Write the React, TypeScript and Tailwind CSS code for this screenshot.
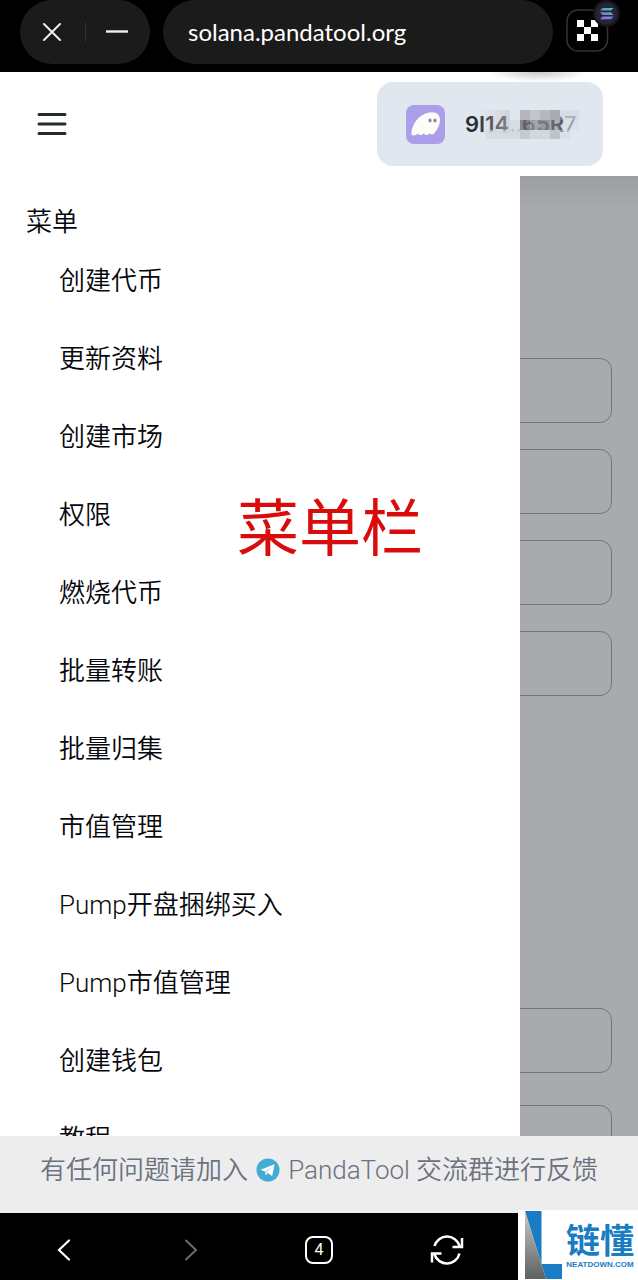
import React from 'react';

const menuItems = [
  '创建代币',
  '更新资料',
  '创建市场',
  '权限',
  '燃烧代币',
  '批量转账',
  '批量归集',
  '市值管理',
  'Pump开盘捆绑买入',
  'Pump市值管理',
  '创建钱包',
  '教程',
];

const inputClass =
  'block h-[65px] w-full shrink-0 rounded-xl border border-[#74757a] bg-transparent px-4 text-2xl outline-none';

function BrowserBar() {
  return (
    <div className="flex h-[72px] shrink-0 items-start bg-black pl-5 font-['Lato',sans-serif]">
      <div className="flex h-16 w-[130px] shrink-0 items-center justify-between rounded-full bg-[#1b1b1b] px-5">
        <button type="button" aria-label="关闭" className="flex size-6 items-center justify-center">
          <svg width="20" height="20" viewBox="0 0 20 20" fill="none" stroke="#efefef" strokeWidth="2" strokeLinecap="round">
            <path d="M2 2 18 18M18 2 2 18" />
          </svg>
        </button>
        <span className="h-5 w-px bg-[#303030]" />
        <button type="button" aria-label="最小化" className="flex size-6 items-center justify-center">
          <svg width="24" height="20" viewBox="0 0 24 20" fill="none" stroke="#efefef" strokeWidth="2.400">
            <path d="M0 9.500h22" />
          </svg>
        </button>
      </div>
      <div className="ml-[13px] flex h-16 min-w-0 flex-1 items-center rounded-full bg-[#1b1b1b] pl-[25px] text-2xl text-white">
        solana.pandatool.org
      </div>
      <button type="button" aria-label="钱包" className="relative mt-2 mr-7 ml-[13px] size-11 shrink-0">
        <svg width="44" height="44" viewBox="0 0 44 44">
          <rect x="1" y="2" width="40.500" height="41" rx="11" fill="#000" stroke="#333" strokeWidth="1.500" />
          <path fill="#fff" d="M11 12h7v7h-7zM18 19h7v7h-7zM25 12h7v7h-7zM11 26h7v7h-7zM25 26h7v7h-7z" />
        </svg>
        <svg className="absolute -top-2 left-[26px]" width="30" height="30" viewBox="0 0 30 30">
          <defs>
            <linearGradient id="sol" x1="0" y1="1" x2="1" y2="0">
              <stop offset="0" stopColor="#a65be0" />
              <stop offset="0.5" stopColor="#6c8ccc" />
              <stop offset="1" stopColor="#35d6b5" />
            </linearGradient>
          </defs>
          <circle cx="14.500" cy="13.500" r="13.500" fill="#16161a" />
          <circle cx="14.500" cy="13.500" r="11" fill="#252535" />
          <path fill="url(#sol)" d="M10.500 8h11l-2.500 2.600H8zM8 12.300h11l2.500 2.600h-11zM10.500 16.600h11L19 19.200H8z" />
        </svg>
      </button>
    </div>
  );
}

function GhostIcon() {
  return (
    <svg width="39" height="39" viewBox="0 0 39 39" className="shrink-0">
      <rect width="39" height="39" rx="8" fill="#ab9fec" />
      <path
        fill="#fffdf8"
        d="M5.500 27.500C6.500 17 15 7.500 26 7.200c5.500 0 8.300 3.500 8 8.300-.5 5.500-3 10-6 13-1.600 1.500-3.600 1.200-4.200-.5-1.500 2.300-4.800 3-5.900.2-1.500 2.300-4.800 2.500-5.800.3-1.600 1.500-4.600 2.500-6.100 1.600-.6-.4-.6-1.500-.5-2.600z"
      />
      <ellipse cx="24" cy="15.500" rx="1.600" ry="2.100" fill="#8d85a8" />
      <ellipse cx="29" cy="15.500" rx="1.600" ry="2.100" fill="#8d85a8" />
    </svg>
  );
}

function AddressMosaic() {
  return (
    <svg className="absolute top-0 left-[11px]" width="104" height="32" viewBox="0 0 104 32">
      <defs>
        <linearGradient id="fade" x1="0" x2="1">
          <stop offset="0" stopColor="#d3d8e1" stopOpacity="0" />
          <stop offset="1" stopColor="#c4c7ce" stopOpacity="0.6" />
        </linearGradient>
      </defs>
      <rect x="0" y="2" width="34" height="24" fill="url(#fade)" />
      <rect x="10" y="22" width="34" height="9" fill="#d3d7df" opacity="0.7" />
      <rect x="34" y="12" width="10" height="10" fill="#cbd1da" opacity="0.5" />
      <rect x="44" y="2" width="10" height="10" fill="#b4b7bf" />
      <rect x="54" y="2" width="10" height="10" fill="#c1c5cc" />
      <rect x="64" y="2" width="10" height="10" fill="#b5b8c0" />
      <rect x="74" y="2" width="10" height="10" fill="#a9abb1" />
      <rect x="84" y="2" width="19" height="10" fill="#ced3dc" opacity="0.5" />
      <rect x="44" y="12" width="10" height="10" fill="#6f7176" opacity="0.8" />
      <rect x="54" y="12" width="10" height="10" fill="#94969c" opacity="0.8" />
      <rect x="64" y="12" width="10" height="10" fill="#85878c" opacity="0.8" />
      <rect x="74" y="12" width="10" height="10" fill="#888a8f" opacity="0.6" />
      <rect x="84" y="12" width="19" height="10" fill="#cdd2db" opacity="0.3" />
      <rect x="44" y="22" width="10" height="9" fill="#c6cad2" />
      <rect x="54" y="22" width="20" height="9" fill="#d3d8e0" />
      <rect x="74" y="22" width="10" height="9" fill="#bfc3ca" />
      <rect x="84" y="22" width="10" height="9" fill="#d5dae3" opacity="0.6" />
    </svg>
  );
}

function Header() {
  return (
    <header className="relative flex h-[104px] shrink-0 items-center justify-between bg-white pr-[35px] pl-[38px]">
      <div className="absolute top-0 right-[50px] h-[10px] w-[100px] bg-radial-[ellipse_at_top] from-[#c9c9c9] to-white to-70%" />
      <button type="button" aria-label="菜单" className="flex size-7 items-center justify-center">
        <svg width="30" height="24" viewBox="0 0 30 24" fill="none" stroke="#252b2b" strokeWidth="3" strokeLinecap="round" className="shrink-0">
          <path d="M2 2.500h26M2 12h26M2 21.500h26" />
        </svg>
      </button>
      <button
        type="button"
        className="flex h-[84px] w-[226px] items-center rounded-2xl bg-[#e1e7ef] pl-[29px] text-left font-['Inter',sans-serif] text-[22px] font-semibold text-[#2a2d31]"
      >
        <GhostIcon />
        <span className="relative ml-5 leading-8 whitespace-nowrap">
          9I14<span className="font-normal text-[#a4a8b0]">..</span>
          <span>65R</span>
          <span className="font-normal text-[#85888e]">7</span>
          <AddressMosaic />
        </span>
      </button>
    </header>
  );
}

function TokenForm() {
  return (
    <form className="flex h-full flex-col gap-[26px] overflow-hidden bg-[#a9aaae] bg-linear-to-b from-[#9d9ea1] to-[#a9aaae] to-[36px] px-[26px] pt-[182px]">
      <input aria-label="代币名称" className={inputClass} />
      <input aria-label="代币符号" className={inputClass} />
      <input aria-label="精度" className={inputClass} />
      <input aria-label="供应量" className={inputClass} />
      <div className="mt-[286px] flex shrink-0 flex-col gap-8">
        <input aria-label="官网" className={inputClass} />
        <input aria-label="电报" className={inputClass} />
      </div>
    </form>
  );
}

function MenuDrawer() {
  return (
    <nav className="absolute inset-y-0 left-0 w-[520px] max-w-[82%] overflow-hidden bg-white pt-[26px] text-[26px] font-[350] text-[#05070c]">
      <h2 className="flex h-10 items-center pl-[26px]">菜单</h2>
      <ul>
        {menuItems.map((item) => (
          <li key={item}>
            <a href="#" className="flex h-[78px] items-center pl-[59px]">
              {item}
            </a>
          </li>
        ))}
      </ul>
      <p className="absolute top-[308px] left-[237px] text-[62px] leading-[92px] font-normal whitespace-nowrap text-[#d90b0b]">菜单栏</p>
    </nav>
  );
}

function FeedbackBar() {
  return (
    <footer className="flex h-[77px] shrink-0 items-start justify-center bg-[#ededed] pt-[14px] text-[26px] leading-10 font-[350] whitespace-nowrap text-[#6b7280]">
      <span>有任何问题请加入</span>
      <a href="#" className="ml-2 flex items-center">
        <svg width="24" height="24" viewBox="0 0 24 24" className="mr-2 shrink-0">
          <circle cx="12" cy="12" r="11.500" fill="#42acd5" />
          <path fill="#fff" d="M4.500 11.800 18.500 6.300 16.200 18l-4.300-3-2.100 2.300-.8-3.800z" />
          <path fill="#b7d9ea" d="m9 13.500 7-4.800-5.300 5.700-.9 2.900z" />
        </svg>
        PandaTool
      </a>
      <span className="ml-1.5">交流群进行反馈</span>
    </footer>
  );
}

function BottomNav() {
  return (
    <div className="grid h-[67px] shrink-0 grid-cols-5 bg-black pt-1.5">
      <button type="button" aria-label="后退" className="flex items-center justify-center">
        <svg width="24" height="24" viewBox="0 0 24 24" fill="none" stroke="#fff" strokeWidth="2.200" strokeLinecap="round">
          <path d="M17 2.500 7 12l10 9.500" />
        </svg>
      </button>
      <button type="button" aria-label="前进" className="flex items-center justify-center">
        <svg width="24" height="24" viewBox="0 0 24 24" fill="none" stroke="#6b6b6b" strokeWidth="2" strokeLinecap="round">
          <path d="m7 2.500 10 9.500L7 21.500" />
        </svg>
      </button>
      <button type="button" className="flex items-center justify-center">
        <span className="flex size-7 items-center justify-center rounded-lg border-2 border-white text-base text-white">4</span>
      </button>
      <button type="button" aria-label="刷新" className="flex items-center justify-center">
        <svg width="34" height="30" viewBox="0 0 34 30" fill="none" stroke="#fff" strokeWidth="2.500">
          <path d="M4.500 11A13 13 0 0 1 29.500 11M32 3v9h-9.500M29.500 18.500A13 13 0 0 1 4.500 19.500M2 27.500v-9h9.500" />
        </svg>
      </button>
    </div>
  );
}

function Watermark() {
  return (
    <div className="absolute right-0 bottom-0 flex h-[70px] w-[120px] bg-white pt-px pl-[7px] text-[#1a7dc4]">
      <svg width="38" height="68" viewBox="0 0 38 68" className="shrink-0">
        <defs>
          <linearGradient id="metal" x1="0" y1="0" x2="0" y2="1">
            <stop offset="0" stopColor="#c9c9c9" />
            <stop offset="1" stopColor="#5d5f60" />
          </linearGradient>
        </defs>
        <path fill="#1a7dc4" d="M0 0h16.500v53H37v15H21z" />
        <path fill="url(#metal)" d="M0 0v68h21z" />
      </svg>
      <div className="ml-[3px] flex flex-col items-center pt-3">
        <span className="text-[34px] leading-9 font-bold">链懂</span>
        <span className="font-['Liberation_Sans',sans-serif] text-[8px] leading-3 font-bold">NEATDOWN.COM</span>
      </div>
    </div>
  );
}

export default function App() {
  return (
    <div className="relative flex h-screen flex-col overflow-hidden bg-white font-['Roboto','Noto_Sans_CJK_SC',sans-serif]">
      <BrowserBar />
      <Header />
      <main className="relative min-h-0 flex-1">
        <TokenForm />
        <MenuDrawer />
      </main>
      <FeedbackBar />
      <BottomNav />
      <Watermark />
    </div>
  );
}
